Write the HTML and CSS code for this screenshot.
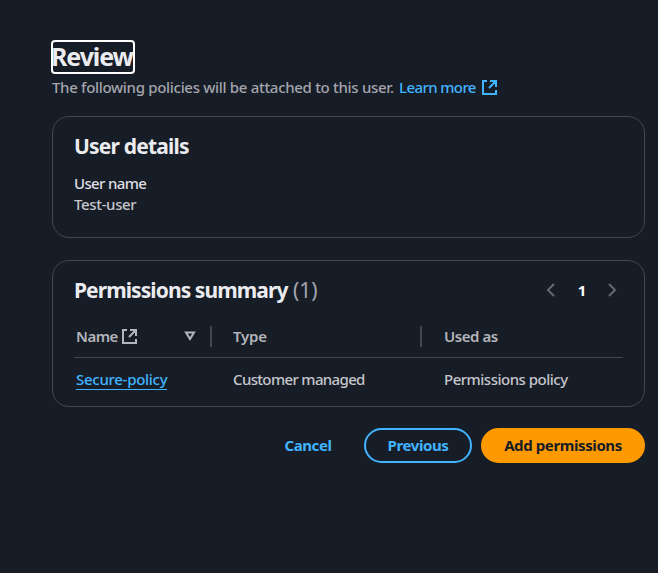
FILE: index.html
```html
<!DOCTYPE html>
<html lang="en">
<head>
<meta charset="utf-8">
<title>Review</title>
<link rel="stylesheet" href="styles.css">
</head>
<body>
<main class="page">
  <header class="page-header">
    <h1 class="page-title">Review</h1>
    <p class="description"><span class="description-text">The following policies will be attached to this user.</span><a class="learn-more" href="#">Learn more</a><svg class="external" viewBox="0 0 15 15"><path d="M5 1H1v13h13v-4M8 1h6v6M14 1 7 8"/></svg></p>
  </header>

  <section class="card details">
    <h2 class="card-title details-title">User details</h2>
    <dl class="pair">
      <dt class="pair-label">User name</dt>
      <dd class="pair-value">Test-user</dd>
    </dl>
  </section>

  <section class="card summary">
    <div class="summary-header">
      <h2 class="card-title summary-title">Permissions summary</h2>
      <span class="counter">(1)</span>
      <nav class="pagination">
        <svg class="chevron" viewBox="0 0 10 16"><path d="M8 2 2 8l6 6"/></svg>
        <span class="page-number">1</span>
        <svg class="chevron" viewBox="0 0 10 16"><path d="m2 2 6 6-6 6"/></svg>
      </nav>
    </div>
    <div class="row head-row">
      <div class="cell head-name"><span class="th-name">Name</span><svg class="external" viewBox="0 0 15 15"><path d="M5 1H1v13h13v-4M8 1h6v6M14 1 7 8"/></svg><svg class="sort" viewBox="0 0 12 10"><path d="M2 1.500h8L6 8z"/></svg></div>
      <div class="cell"><span class="th-type">Type</span></div>
      <div class="cell"><span class="th-used">Used as</span></div>
    </div>
    <div class="row body-row">
      <div class="cell"><a class="policy-link" href="#">Secure-policy</a></div>
      <div class="cell"><span class="td-type">Customer managed</span></div>
      <div class="cell"><span class="td-used">Permissions policy</span></div>
    </div>
  </section>

  <footer class="actions">
    <button class="button link"><span class="t-cancel">Cancel</span></button>
    <button class="button outlined"><span class="t-previous">Previous</span></button>
    <button class="button primary"><span class="t-add">Add permissions</span></button>
  </footer>
</main>
</body>
</html>
```
FILE: styles.css
```css
* { box-sizing: border-box; }
body {
  margin: 0;
  background: #161d26;
  color: #c6c6cd;
  font: 15px/20px "Noto Sans", "Open Sans", sans-serif;
  white-space: nowrap;
}
h1, h2, p, dl, dd { margin: 0; }
svg { fill: none; stroke: currentColor; flex: none; }
a { text-decoration: none; color: #42b4ff; }
.description, .pair, .body-row { font-weight: 500; }

.page { width: 593px; margin-left: 52px; padding-top: 41px; }
.page-header { height: 75px; }
.page-title {
  width: 82px;
  height: 32px;
  color: #ebebf0;
  font-size: 25px;
  line-height: 31px;
  letter-spacing: -1.1px;
  text-indent: -1px;
  border-radius: 3px;
  outline: 2px solid #fff;
  outline-offset: -1px;
}
.description { display: flex; align-items: center; margin-top: 4px; color: #a4a4ad; }
.description-text { width: 347px; letter-spacing: -.31px; }
.learn-more { width: 83px; letter-spacing: -.6px; }
.external { width: 15px; height: 15px; stroke-width: 2; }
.description .external { color: #42b4ff; }

.card { border: 1px solid #424650; border-radius: 17px; padding: 0 21px; }
.card-title { color: #ebebf0; font-size: 21px; line-height: 26px; letter-spacing: -.8px; }
.details { height: 122px; padding-top: 16px; }
.pair { margin-top: 14px; line-height: 21px; }
.pair-label { color: #dedee3; letter-spacing: -.65px; }
.pair-value { letter-spacing: -.35px; }

.summary { height: 147px; margin-top: 22px; padding-top: 16px; }
.summary-header { display: flex; align-items: center; height: 26px; }
.summary-title { width: 219px; letter-spacing: -.92px; }
.counter { color: #a4a4ad; font-size: 21px; }
.pagination { display: flex; align-items: center; margin-left: auto; padding-right: 6px; color: #656871; }
.chevron { width: 10px; height: 16px; stroke-width: 2; }
.page-number { width: 51px; padding-left: 1px; text-align: center; color: #fff; font-weight: 700; }
.row { display: grid; grid-template-columns: 136px 210px 203px; align-items: center; }
.head-row { height: 55px; padding-top: 12px; border-bottom: 1px solid #424650; color: #b4b4bb; font-weight: 600; }
.body-row { height: 44px; }
.cell { display: flex; align-items: center; padding-left: 24px; }
.cell:first-child { padding-left: 2px; }
.cell:nth-child(2) span { margin-left: -1px; }
.head-row .cell { height: 21px; }
.head-row .cell + .cell { border-left: 2px solid #424650; padding-left: 22px; }
.th-name { width: 46px; padding-bottom: 1px; letter-spacing: -.5px; }
.sort { width: 12px; height: 10px; margin-left: auto; margin-right: 14px; stroke-width: 2; }
.th-type { letter-spacing: -.2px; }
.th-used { letter-spacing: -.45px; }
.policy-link { border-bottom: 1px solid #42b4ff; letter-spacing: -.28px; }
.td-type { letter-spacing: -.65px; }
.td-used { letter-spacing: -.5px; }
.body-row .cell { padding-bottom: 2px; }
.body-row .cell:first-child { padding-bottom: 1px; }

.actions { display: flex; justify-content: flex-end; margin-top: 21px; }
.button {
  height: 35px;
  padding: 0 0 2px;
  border: 2px solid transparent;
  border-radius: 18px;
  background: none;
  color: #42b4ff;
  font: 700 15px/20px "Noto Sans", "Open Sans", sans-serif;
  letter-spacing: -.4px;
}
.link { width: 96px; margin-right: 8px; }
.outlined { width: 108px; margin-right: 9px; border-color: #42b4ff; }
.primary { width: 164px; background: #ff9900; border-color: #ff9900; color: #161d26; }
```
